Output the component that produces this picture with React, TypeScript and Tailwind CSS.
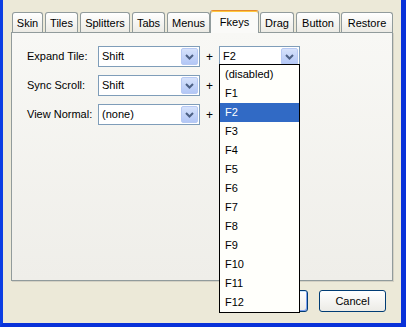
import React from 'react'

const tabs = [
  { label: 'Skin', cls: 'w-[31px]' },
  { label: 'Tiles', cls: 'w-[33px] ml-[2px]' },
  { label: 'Splitters', cls: 'w-[50px] ml-[2px]' },
  { label: 'Tabs', cls: 'w-[33px] ml-[2px]' },
  { label: 'Menus', cls: 'w-[43px] ml-[2px]' },
  { label: 'Fkeys', cls: 'w-[49px]', active: true },
  { label: 'Drag', cls: 'w-[34px] ml-[1px]' },
  { label: 'Button', cls: 'w-[44px] ml-[2px]' },
  { label: 'Restore', cls: 'w-[52px] ml-[1px]' },
]

const keys = ['(disabled)', 'F1', 'F2', 'F3', 'F4', 'F5', 'F6', 'F7', 'F8', 'F9', 'F10', 'F11', 'F12']

function Arrow() {
  return (
    <span className="w-[17px] h-[17px] mr-[1px] shrink-0 rounded-[2px] border border-[#b7c9f3] bg-gradient-to-b from-[#d6e2fb] to-[#b3c7f6] flex items-center justify-center">
      <svg width="9" height="6" viewBox="0 0 9 6">
        <path d="M1 1 L4.5 4.5 L8 1" stroke="#4d6185" strokeWidth="2" fill="none" />
      </svg>
    </span>
  )
}

function Combo({ value, className }: { value: string; className: string }) {
  return (
    <div className={`${className} h-[21px] flex items-center border border-[#7f9db9] bg-white`}>
      <span className="flex-1 pl-[3px] leading-none">{value}</span>
      <Arrow />
    </div>
  )
}

function Row({ label, value, right }: { label: string; value: string; right: string }) {
  return (
    <div className="flex items-center h-[21px]">
      <span className="w-[71px]">{label}</span>
      <Combo value={value} className="w-[102px]" />
      <span className="w-[19px] text-center text-[12px]">+</span>
      <Combo value={right} className="w-[81px]" />
    </div>
  )
}

export default function App() {
  return (
    <div className="relative w-[406px] h-[327px] flex flex-col bg-[#ece9d8] border-l-[3px] border-l-[#0b3ee3] border-r-[5px] border-r-[#0831d9] border-b-[4px] border-b-[#0831d9] text-[11px] text-black font-['Liberation_Sans',Arial,sans-serif]">
      {/* tab strip */}
      <div className="flex items-end h-[22px] mt-[10px] pl-[9px]">
        {tabs.map((t) =>
          t.active ? (
            <div
              key={t.label}
              className={`${t.cls} relative z-10 h-[23px] -mb-[1px] flex items-start justify-center pt-[3px] rounded-t-[3px] border border-b-0 border-[#919b9c] border-t-[#e68b2c] shadow-[inset_0_1px_0_#ffc83c] bg-[#fafaf8]`}
            >
              {t.label}
            </div>
          ) : (
            <div
              key={t.label}
              className={`${t.cls} h-[20px] flex items-center justify-center pt-[1px] rounded-t-[3px] border border-b-0 border-[#919b9c] bg-gradient-to-b from-white to-[#ecebe5]`}
            >
              {t.label}
            </div>
          )
        )}
      </div>

      {/* tab page */}
      <div className="ml-[8px] w-[382px] h-[249px] border border-[#919b9c] shadow-[1px_1px_0_#d4d1c4] bg-gradient-to-b from-[#f8f8f5] to-[#efeee9] pt-[13px] pl-[15px] flex flex-col gap-[8px]">
        <Row label="Expand Tile:" value="Shift" right="F2" />
        <Row label="Sync Scroll:" value="Shift" right="" />
        <Row label="View Normal:" value="(none)" right="" />
      </div>

      {/* dialog buttons */}
      <div className="flex justify-end gap-[11px] mt-[9px] pr-[15px]">
        <button className="w-[67px] h-[22px] rounded-[3px] border border-[#003c74] bg-gradient-to-b from-white to-[#ecebe6] shadow-[inset_-1px_-1px_0_#7b9ff0,inset_1px_1px_0_#cee7ff]">
          OK
        </button>
        <button className="w-[67px] h-[22px] rounded-[3px] border border-[#003c74] bg-gradient-to-b from-white to-[#ecebe6]">
          Cancel
        </button>
      </div>

      {/* open dropdown list */}
      <div className="absolute left-[216px] top-[64px] w-[81px] h-[249px] border border-black bg-[#fffffb] z-20">
        {keys.map((k) => (
          <div
            key={k}
            className={`h-[19px] flex items-center pl-[5px] ${k === 'F2' ? 'bg-[#316ac5] text-white' : ''}`}
          >
            {k}
          </div>
        ))}
      </div>
    </div>
  )
}
